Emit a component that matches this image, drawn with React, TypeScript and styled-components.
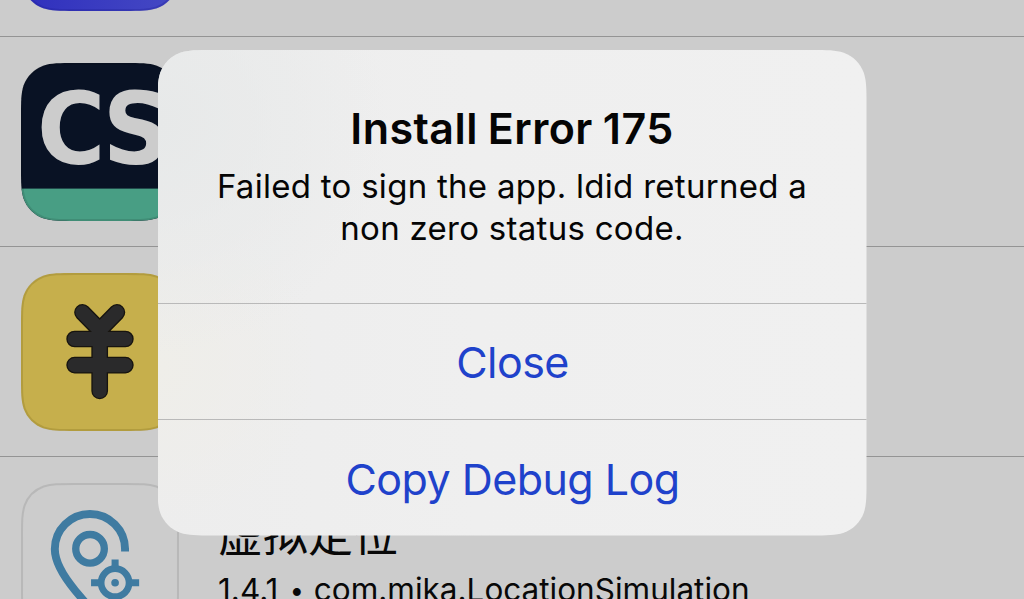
import React from 'react';
import styled, { createGlobalStyle } from 'styled-components';

const ICON_SIZE = 157;
const ALERT_SIZE = { WIDTH: 709, HEIGHT: 485.5 };

// continuous corner, the smoothed rounding that iOS uses
const squircle = (w: number, h: number, r: number, inset = 0) => {
  const a = 1.528665 * r;
  const b = 1.088493 * r;
  const c = 0.868407 * r;
  const d = 0.631494 * r;
  const e = 0.0749114 * r;
  const f = 0.372824 * r;
  const g = 0.16906 * r;
  const i = inset;
  const x = w - inset;
  const y = h - inset;
  return [
    `M${i + a} ${i}L${x - a} ${i}`,
    `C${x - b} ${i} ${x - c} ${i} ${x - d} ${i + e}`,
    `C${x - f} ${i + g} ${x - g} ${i + f} ${x - e} ${i + d}`,
    `C${x} ${i + c} ${x} ${i + b} ${x} ${i + a}`,
    `L${x} ${y - a}`,
    `C${x} ${y - b} ${x} ${y - c} ${x - e} ${y - d}`,
    `C${x - g} ${y - f} ${x - f} ${y - g} ${x - d} ${y - e}`,
    `C${x - c} ${y} ${x - b} ${y} ${x - a} ${y}`,
    `L${i + a} ${y}`,
    `C${i + b} ${y} ${i + c} ${y} ${i + d} ${y - e}`,
    `C${i + f} ${y - g} ${i + g} ${y - f} ${i + e} ${y - d}`,
    `C${i} ${y - c} ${i} ${y - b} ${i} ${y - a}`,
    `L${i} ${i + a}`,
    `C${i} ${i + b} ${i} ${i + c} ${i + e} ${i + d}`,
    `C${i + g} ${i + f} ${i + f} ${i + g} ${i + d} ${i + e}`,
    `C${i + c} ${i} ${i + b} ${i} ${i + a} ${i}Z`,
  ].join('');
};

interface IAppIcon {
  id: string;
  fill: string;
  border: string;
  children?: React.ReactNode;
}

const AppIcon: React.FC<IAppIcon> = ({ id, fill, border, children }) => {
  return (
    <IconSvg viewBox={`0 0 ${ICON_SIZE} ${ICON_SIZE}`}>
      <defs>
        <clipPath id={id}>
          <path d={squircle(ICON_SIZE, ICON_SIZE, 35)} />
        </clipPath>
        <linearGradient id="violet" x1="0" x2="1" y1="0" y2="0">
          <stop offset="0" stopColor="#2f2fbd" />
          <stop offset="1" stopColor="#4549c4" />
        </linearGradient>
      </defs>
      <g clipPath={`url(#${id})`}>
        <rect width={ICON_SIZE} height={ICON_SIZE} fill={fill} />
        {children}
      </g>
      <path
        d={squircle(ICON_SIZE, ICON_SIZE, 34, 1)}
        fill="none"
        stroke={border}
        strokeWidth="2"
      />
    </IconSvg>
  );
};

const ScannerArt = () => (
  <>
    <text
      transform="translate(16 100.2) scale(.94 1)"
      fontFamily="'DejaVu Sans', sans-serif"
      fontWeight="700"
      fontSize="98.5"
      fill="#cccccc"
    >
      C<tspan x="69.3">S</tspan>
    </text>
    <rect y="124.8" width={ICON_SIZE} height="33" fill="#489e84" />
  </>
);

const YEN =
  'M61.1 39.1L78.2 56.5L95.3 39.1M78.2 56.5V117.2M53.3 65.6H103.7M53.3 91.5H103.7';

const YenArt = () => (
  <g fill="none" strokeLinecap="round" strokeLinejoin="round">
    <path d={YEN} stroke="#17140f" strokeWidth="16.6" />
    <path d={YEN} stroke="#2a2a2b" strokeWidth="14" />
  </g>
);

const LocationArt = () => (
  <g fill="none" stroke="#3f7ba1">
    <path
      d="M103.4 68V65.7A34.9 34.9 0 0 0 33.6 65.7C33.6 80 44 95 54 107L70 126"
      strokeWidth="7.9"
    />
    <circle cx="68.6" cy="65.4" r="14.2" strokeWidth="7.3" />
    <circle cx="93.5" cy="99.1" r="13.9" strokeWidth="6.7" />
    <path
      d="M93.5 76V84M93.5 114.5V123M69.6 99.1H78M109 99.1H117.4"
      strokeWidth="7"
    />
    <circle cx="93.5" cy="99.1" r="3.8" fill="#3f7ba1" stroke="none" />
  </g>
);

const App: React.FC = () => {
  return (
    <Screen>
      <GlobalStyle />
      <AppList>
        <AppRow>
          <AppIcon id="violet-app" fill="url(#violet)" border="rgba(30,30,150,.3)" />
        </AppRow>
        <AppRow>
          <AppIcon id="scanner" fill="#091224" border="rgba(0,0,0,.1)">
            <ScannerArt />
          </AppIcon>
        </AppRow>
        <AppRow>
          <AppIcon id="yen" fill="#c6af4c" border="rgba(90,70,0,.18)">
            <YenArt />
          </AppIcon>
        </AppRow>
        <AppRow>
          <AppIcon id="location" fill="#cccccc" border="#b8b8b8">
            <LocationArt />
          </AppIcon>
          <AppInfo>
            <AppName>虚拟定位</AppName>
            <AppDetail>
              1.4.1 <Bullet>•</Bullet> com.mika.LocationSimulation
            </AppDetail>
          </AppInfo>
        </AppRow>
      </AppList>
      <Overlay>
        <Alert>
          <AlertBody>
            <AlertTitle>Install Error 175</AlertTitle>
            <AlertMessage>
              Failed to sign the app. ldid returned a
              <br />
              non zero status code.
            </AlertMessage>
          </AlertBody>
          <AlertButton>Close</AlertButton>
          <AlertButton>Copy Debug Log</AlertButton>
        </Alert>
      </Overlay>
    </Screen>
  );
};

const GlobalStyle = createGlobalStyle`
  * {
    box-sizing: border-box;
  }

  body {
    margin: 0;
    background: #cccccc;
    font-family: Inter, 'Liberation Sans', sans-serif;
  }
`;

const Screen = styled.div`
  position: relative;
  width: 100%;
  height: 599px;
  overflow: hidden;
  background: #cccccc;
`;

const AppList = styled.div`
  display: flex;
  flex-direction: column;
  margin-top: -173px;
`;

const AppRow = styled.div`
  display: flex;
  flex-shrink: 0;
  height: 210px;
  padding: 26px 0 0 21px;
  border-bottom: 1px solid #949494;
`;

const IconSvg = styled.svg`
  width: 158px;
  height: 158px;
  flex-shrink: 0;
`;

const AppInfo = styled.div`
  display: flex;
  flex-direction: column;
  padding: 23px 0 0 39px;
  color: #080808;
  white-space: nowrap;
`;

const AppName = styled.span`
  font-family: 'Noto Sans CJK SC', sans-serif;
  font-size: 45px;
  line-height: 54px;
`;

const AppDetail = styled.span`
  margin-top: 9px;
  font-size: 31.5px;
  line-height: 42px;
`;

const Bullet = styled.span`
  display: inline-block;
  transform: translateX(1px) scale(0.8);
`;

const Overlay = styled.div`
  position: absolute;
  inset: 0;
  display: flex;
  justify-content: center;
  align-items: flex-start;
  padding-top: 50px;
`;

const Alert = styled.div`
  display: flex;
  flex-direction: column;
  width: ${ALERT_SIZE.WIDTH}px;
  height: ${ALERT_SIZE.HEIGHT}px;
  background:
    radial-gradient(circle at 0 15%, #e7e9e9 0, rgba(231, 233, 233, 0) 230px),
    radial-gradient(circle at 0 65%, #efeee9 0, rgba(239, 238, 233, 0) 160px),
    linear-gradient(90deg, #ededed 0%, #efefef 45%, #f0f0f0 100%);
  clip-path: path('${squircle(ALERT_SIZE.WIDTH, ALERT_SIZE.HEIGHT, 36)}');
`;

const AlertBody = styled.div`
  height: 253px;
  padding-top: 51px;
  text-align: center;
  color: #050505;
`;

const AlertTitle = styled.h1`
  margin: 0;
  font-size: 43px;
  font-weight: 600;
  letter-spacing: 0.45px;
  word-spacing: -1.4px;
  line-height: 54px;
`;

const AlertMessage = styled.p`
  margin: 10px 0 0;
  font-size: 33px;
  letter-spacing: 0.28px;
  line-height: 42px;
`;

const AlertButton = styled.button`
  height: 116.5px;
  padding: 2px 0 0 1px;
  border: 0;
  border-top: 1px solid #b9b9b9;
  background: transparent;
  color: #1f42cb;
  font-family: inherit;
  font-size: 43px;
  letter-spacing: -0.55px;
`;

export default App;
